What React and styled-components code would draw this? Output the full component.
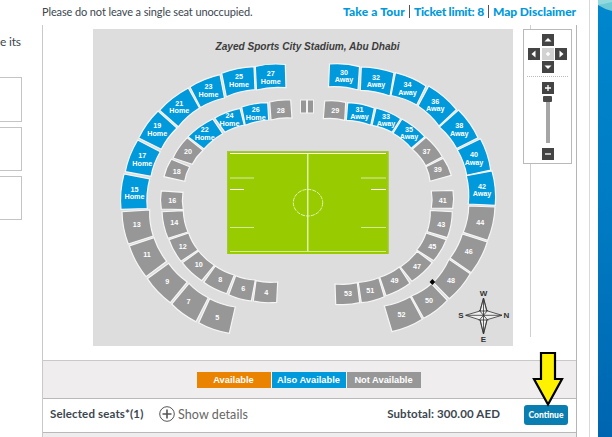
import styled, { createGlobalStyle } from "styled-components";

const HOME = "Home";
const AWAY = "Away";

// corners go outer start, outer end, inner end, inner start; then label x, y
const blocks = [
  { no: 15, side: HOME, pts: [121, 209.3, 124, 174, 149.7, 179, 147.3, 208.5], at: [134.5, 192.5] },
  { no: 17, side: HOME, pts: [125.3, 171.7, 137.7, 140, 160.3, 151.7, 151, 176.3], at: [142.3, 159] },
  { no: 19, side: HOME, pts: [138.7, 138, 158, 111, 177, 128, 161.3, 149.3], at: [157.2, 129] },
  { no: 21, side: HOME, pts: [159.5, 110.3, 188.3, 88, 199.5, 108, 178.3, 126.8], at: [179.3, 106.5] },
  { no: 23, side: HOME, pts: [190, 87, 220, 74.7, 224.5, 98, 200.5, 107.5], at: [208.5, 90] },
  { no: 25, side: HOME, pts: [221.7, 73.3, 254, 66.7, 255, 89.7, 226.3, 96.7], at: [239, 80] },
  { no: 27, side: HOME, pts: [255.3, 66.5, 285.3, 64.5, 286, 87.7, 256.5, 90], at: [270.7, 77] },
  { no: 30, side: AWAY, pts: [329.5, 64, 359.5, 66.7, 358, 90, 328.5, 86.8], at: [344, 75.5] },
  { no: 32, side: AWAY, pts: [361.3, 66.8, 394, 72.8, 390, 96, 360.3, 90.3], at: [376, 80.5] },
  { no: 34, side: AWAY, pts: [395.5, 72.7, 426, 86, 416.7, 105, 391, 95.5], at: [407.5, 88] },
  { no: 36, side: AWAY, pts: [428.7, 86, 456.5, 109.5, 439, 126, 418, 106], at: [435.3, 104.7] },
  { no: 38, side: AWAY, pts: [458.5, 110, 478, 137.7, 456.7, 148.5, 439.3, 127], at: [459.3, 129] },
  { no: 40, side: AWAY, pts: [480.5, 138.7, 490.7, 170, 466.7, 175.3, 457.3, 150], at: [474, 158] },
  { no: 42, side: AWAY, pts: [492, 171, 495.3, 205.3, 468.3, 204, 466.3, 175.7], at: [482, 189.5] },
  { no: 44, pts: [495, 207, 487.7, 240.3, 463.3, 232.3, 468.7, 206], at: [480.3, 222.3] },
  { no: 46, pts: [487.3, 242, 471.3, 272.7, 450, 258, 462.3, 234], at: [468.7, 251.5] },
  { no: 48, pts: [470.3, 273.7, 449.3, 298.7, 433.3, 282.3, 449, 259.3], at: [451, 280.3] },
  { no: 50, pts: [447.3, 300.3, 423.7, 318.3, 411.3, 296, 431.3, 283.7], at: [429, 300] },
  { no: 52, pts: [422.3, 319.3, 392, 331.7, 384.3, 306, 410.3, 296.7], at: [401.5, 314.7] },
  { no: 13, pts: [128.3, 244, 122, 211.7, 149.7, 210, 153.3, 236], at: [136.7, 224] },
  { no: 11, pts: [146, 276.7, 129.3, 246, 154, 237.7, 166.7, 261.3], at: [147, 254.5] },
  { no: 9, pts: [170.3, 302.7, 147.3, 278.7, 168.7, 263.3, 187.3, 282], at: [167.3, 281.3] },
  { no: 7, pts: [196, 321.7, 171.7, 304, 189, 283.3, 208.3, 297.7], at: [188.5, 301.7] },
  { no: 5, pts: [229.3, 333.3, 198.7, 322.7, 209.7, 298.7, 235.3, 307], at: [217.3, 317.3] },
  { no: 28, pts: [269.7, 102, 290.7, 100, 292, 118, 271, 120], at: [280.7, 110.5] },
  { no: 26, side: HOME, pts: [241.7, 107, 267.7, 102.7, 268.7, 120, 245.3, 125.3], at: [255.7, 113] },
  { no: 24, side: HOME, pts: [214.7, 118, 240, 108.3, 244.3, 125, 225, 132.3], at: [229.5, 119.3] },
  { no: 22, side: HOME, pts: [188, 136.7, 212.7, 119, 222.7, 133.7, 204, 149], at: [204.7, 133] },
  { no: 20, pts: [173, 158, 187.3, 137.7, 203, 150.3, 192.3, 164.3], at: [188, 151.3] },
  { no: 18, pts: [164, 176.7, 171.3, 159.3, 189.7, 166.7, 184.7, 181.3], at: [176.7, 171.3] },
  { no: 16, pts: [161.3, 209, 161.3, 191, 183, 192.3, 183.3, 209.7], at: [172.3, 200.7] },
  { no: 14, pts: [168, 238.3, 162, 211.7, 183.3, 210.7, 188, 232], at: [174.3, 222.3] },
  { no: 12, pts: [181, 261.3, 169, 239.7, 188.7, 233, 198, 250], at: [182.7, 246.7] },
  { no: 10, pts: [201.7, 280.7, 182.3, 262.7, 198.7, 251, 214.3, 265.3], at: [198.7, 264.7] },
  { no: 8, pts: [226.7, 293.7, 203.7, 282.3, 215.3, 266, 234.3, 275], at: [220.3, 279.7] },
  { no: 6, pts: [251.3, 301, 228.7, 294.7, 235.7, 275.7, 255.3, 280], at: [243.3, 288] },
  { no: 4, pts: [276.7, 302.3, 253.3, 301, 256, 280.7, 277.7, 282], at: [266.3, 292.7] },
  { no: 29, pts: [324.7, 101, 345.7, 102.3, 344.7, 120.3, 323.3, 118.7], at: [335.3, 110.3] },
  { no: 31, side: AWAY, pts: [347.7, 102.7, 374.3, 108, 370.7, 125.3, 346.3, 120.3], at: [359.5, 112.7] },
  { no: 33, side: AWAY, pts: [376, 108, 400.7, 118.7, 392, 132.3, 372, 125.3], at: [386, 119.5] },
  { no: 35, side: AWAY, pts: [402, 119, 424.7, 136.7, 411.3, 148.3, 393, 133.3], at: [409, 132.7] },
  { no: 37, pts: [426, 137.3, 442.3, 156.7, 425.7, 165.7, 412.3, 149.3], at: [426.5, 151.3] },
  { no: 39, pts: [443.3, 158.3, 451.3, 175.3, 430, 181.3, 426, 166.7], at: [437.7, 169.7] },
  { no: 41, pts: [453, 190.3, 452.7, 208.3, 431.3, 208, 431.3, 191], at: [442.7, 200] },
  { no: 43, pts: [452.3, 211.7, 447.3, 237.7, 427, 231.7, 430.3, 210.3], at: [441.3, 224.7] },
  { no: 45, pts: [446.3, 239.7, 433.7, 260.7, 416.7, 250, 426, 233], at: [432.3, 246.7] },
  { no: 47, pts: [432.3, 262.7, 412, 281.3, 400.3, 267, 417, 251.3], at: [417, 266] },
  { no: 49, pts: [410, 283.3, 386, 295.7, 379.7, 277.3, 399.3, 267], at: [394.5, 280.5] },
  { no: 51, pts: [384.3, 296.7, 361.3, 302.7, 358.3, 282.3, 378.7, 277.7], at: [370.3, 290.7] },
  { no: 53, pts: [359.7, 302.7, 335.7, 304.3, 335, 284, 357.3, 282.7], at: [348, 293.7] },
];

const legend = [
  { text: "Available", color: "#ea8400" },
  { text: "Also Available", color: "#0099dc" },
  { text: "Not Available", color: "#979797" },
];

// pushes the middle of an edge away from the centre circle
const bend = (x1, y1, x2, y2) => {
  const mx = (x1 + x2) / 2;
  const my = (y1 + y2) / 2;
  const dx = mx - 308;
  const dy = my - 200;
  const len = Math.hypot(dx, dy);
  const amount = Math.hypot(x2 - x1, y2 - y1) / 11;
  return `${mx + (dx / len) * amount} ${my + (dy / len) * amount}`;
};

const blockPath = ([a, b, c, d, e, f, g, h]) =>
  `M${a} ${b}Q${bend(a, b, c, d)} ${c} ${d}L${e} ${f}Q${bend(e, f, g, h)} ${g} ${h}Z`;

const Block = ({ block }) => {
  const [x, y] = block.at;
  return (
    <g>
      <BlockShape d={blockPath(block.pts)} $open={block.side} />
      <BlockLabel x={x} y={block.side ? y - 1 : y + 2.6}>
        {block.no}
      </BlockLabel>
      {block.side && (
        <BlockLabel x={x} y={y + 6.7}>
          {block.side}
        </BlockLabel>
      )}
    </g>
  );
};

const Stadium = () => (
  <Map viewBox="93 29 420 317">
    <MapTitle x="307.5" y="50" textLength="184" lengthAdjust="spacingAndGlyphs">
      Zayed Sports City Stadium, Abu Dhabi
    </MapTitle>
    {blocks.map((block) => (
      <Block key={block.no} block={block} />
    ))}
    <g fill="#979797" stroke="#f4f4f4">
      <rect x="300.5" y="100" width="6" height="13" />
      <rect x="307.5" y="100" width="6" height="13" />
    </g>

    <rect x="227" y="151" width="161.5" height="103" fill="#98cb00" />
    <path d="M227.5 254V151.5H388V254" fill="none" stroke="#a2c63f" />
    <g fill="none" stroke="#fff">
      <path d="M230 153.5H386M230 189.5H244M371 189.5H386" />
      <path d="M307.8 153.5V252" stroke="#effad0" strokeWidth="1.2" />
      <path d="M230 251.5H386M230 227.5H254M361 227.5H386" stroke="#d5eb92" />
      <path d="M230 178H254M361 178H386" stroke="#b9dc58" strokeWidth="2" />
      <ellipse cx="308" cy="202.7" rx="14.7" ry="13.3" stroke="#e4f4b4" strokeDasharray="4 1" />
    </g>

    <path d="M432.4 279L435.2 282L432.4 285L429.6 282Z" fill="#000" />

    <g stroke="#333" strokeWidth="0.8" fill="#f0f0f0">
      <path d="M483.5 298L486.6 310.7L502 315.3L487 319.7L483.5 334L480.2 320L465.5 315.3L480 311Z" />
      <path d="M479 310L488 320.5M488 310L479 320.5M466 315.3H502M483.5 298V334" />
      <path d="M483.5 298L487 311H480ZM483.5 334L487 320H480Z" fill="none" />
    </g>
    <CompassText x="483.5" y="296">W</CompassText>
    <CompassText x="483.5" y="342">E</CompassText>
    <CompassText x="461" y="318.3">S</CompassText>
    <CompassText x="506.5" y="318.3">N</CompassText>
  </Map>
);

const Arrow = ({ d }) => (
  <PadButton>
    <svg width="12" height="12" viewBox="0 0 12 12">
      <path d={d} fill="#fff" />
    </svg>
  </PadButton>
);

const MapControls = () => (
  <Controls>
    <Pad>
      <span />
      <Arrow d="M6 4L9.5 7.5H2.5Z" />
      <span />
      <Arrow d="M3.5 6L7.5 2.5V9.5Z" />
      <PadButton $faded>
        <svg width="12" height="12" viewBox="0 0 12 12">
          <path d="M6 4V8M4 6H8" stroke="#fff" strokeWidth="1.5" />
        </svg>
      </PadButton>
      <Arrow d="M8.5 6L4.5 2.5V9.5Z" />
      <span />
      <Arrow d="M6 8L9.5 4.5H2.5Z" />
      <span />
    </Pad>
    <Divider />
    <PadButton>
      <svg width="12" height="12" viewBox="0 0 12 12">
        <path d="M6 3V9M3 6H9" stroke="#fff" strokeWidth="1.3" />
      </svg>
    </PadButton>
    <Thumb />
    <Track />
    <PadButton>
      <svg width="12" height="12" viewBox="0 0 12 12">
        <path d="M3 6H9" stroke="#fff" strokeWidth="1.3" />
      </svg>
    </PadButton>
  </Controls>
);

const App = () => {
  return (
    <>
      <GlobalStyle />
      <Page>
        <Side>
          <SideText>e its</SideText>
          <SideBox $height={45} />
          <SideBox $height={44} />
          <SideBox $height={44} />
        </Side>

        <Main>
          <Header>
            <Note>Please do not leave a single seat unoccupied.</Note>
            <Links>
              <Link $space="0.15px">Take a Tour</Link>
              <i />
              <Link $space="-0.2px">Ticket limit: 8</Link>
              <i />
              <Link $space="-0.05px">Map Disclaimer</Link>
            </Links>
          </Header>

          <Panel>
            <MapArea>
              <Stadium />
              <ControlRail>
                <MapControls />
              </ControlRail>
            </MapArea>
            <Legend>
              {legend.map((item) => (
                <LegendItem key={item.text} $color={item.color}>
                  {item.text}
                </LegendItem>
              ))}
            </Legend>
            <Summary>
              <Selected>Selected seats*(1)</Selected>
              <Details>
                <svg width="16" height="16" viewBox="0 0 16 16">
                  <circle cx="8" cy="8" r="7.3" fill="none" stroke="#555" />
                  <path d="M8 3.5V12.5M3.5 8H12.5" stroke="#555" strokeWidth="1.6" />
                </svg>
                Show details
              </Details>
              <Subtotal>Subtotal: 300.00 AED</Subtotal>
              <Continue>Continue</Continue>
            </Summary>
          </Panel>
        </Main>

        <Gutter />
        <Backdrop viewBox="0 0 14 437">
          <defs>
            <linearGradient id="sea" x1="0" y1="0" x2="0" y2="1">
              <stop offset="0" stopColor="#0087cd" />
              <stop offset="0.5" stopColor="#007bc3" />
              <stop offset="1" stopColor="#0065b0" />
            </linearGradient>
          </defs>
          <rect width="14" height="437" fill="url(#sea)" />
          <path d="M0 0H14V11Q6 9 0 5Z" fill="#6ecbd6" />
          <path d="M0 0H14V2Q6 4 0 5Z" fill="#93d9de" />
        </Backdrop>

        <Pointer width="34" height="58" viewBox="0 0 34 58">
          <path
            d="M10 3H24V29H31L17 54.5L3 29H10Z"
            fill="#fff200"
            stroke="#000"
            strokeWidth="2.2"
          />
        </Pointer>
      </Page>
    </>
  );
};

export default App;

const GlobalStyle = createGlobalStyle`
  body {
    margin: 0;
    background: #fff;
    font-family: Lato, "Open Sans", sans-serif;
    color: #3c4650;
  }
  * {
    box-sizing: border-box;
  }
`;

const Page = styled.div`
  position: relative;
  display: flex;
  width: 612px;
  height: 437px;
  overflow: hidden;
`;

const Side = styled.aside`
  width: 42px;
  flex: none;
  padding-top: 35px;
`;

const SideText = styled.div`
  height: 42px;
  font-size: 12px;
  line-height: 14px;
  letter-spacing: -0.2px;
  white-space: nowrap;
`;

const SideBox = styled.div`
  width: 22px;
  height: ${(props) => props.$height}px;
  margin-bottom: 5px;
  border: 1px solid #c4c4c4;
  border-left: none;
`;

const Main = styled.main`
  width: 535px;
  flex: none;
`;

const Header = styled.header`
  height: 25px;
  display: flex;
  justify-content: space-between;
  align-items: center;
  padding: 0 1px 2px 0;
  white-space: nowrap;
`;

const Note = styled.span`
  font-size: 11px;
  line-height: 14px;
  letter-spacing: -0.12px;
`;

const Links = styled.nav`
  display: flex;
  align-items: center;

  i {
    width: 1px;
    height: 13px;
    margin: 0 4px;
    background: #555;
  }
`;

const Link = styled.a`
  font-size: 12px;
  line-height: 14px;
  font-weight: 900;
  letter-spacing: ${(props) => props.$space};
  color: #0099dc;
`;

const Panel = styled.section`
  height: 412px;
  border-left: 1px solid #c9c9c9;
  border-right: 1px solid #b5b5b5;
  background: #efedee;
`;

const MapArea = styled.div`
  height: 336px;
  display: flex;
  padding: 4px 0 0 50px;
  background: #fff;
  border-bottom: 1px solid #c9c9c9;
`;

const Map = styled.svg`
  width: 420px;
  height: 317px;
  flex: none;
  background: #ddd;
  font-family: "Liberation Sans", Arial, sans-serif;
  font-weight: bold;
`;

const MapTitle = styled.text`
  font-size: 10px;
  font-style: italic;
  text-anchor: middle;
  fill: #3c3c3c;
`;

const BlockShape = styled.path`
  fill: ${(props) => (props.$open ? "#0099dc" : "#979797")};
  stroke: #f6f6f6;
  stroke-width: 1.2;
`;

const BlockLabel = styled.text`
  font-size: 7.2px;
  text-anchor: middle;
  fill: #fff;
`;

const CompassText = styled.text`
  font-size: 8px;
  text-anchor: middle;
  fill: #333;
`;

const ControlRail = styled.div`
  height: 312px;
  margin: -4px 0 0 17px;
  border-left: 1px solid #d0d0d0;
`;

const Controls = styled.div`
  width: 49px;
  height: 135px;
  margin: 4px 0 0 -8px;
  padding-top: 4px;
  display: flex;
  flex-direction: column;
  align-items: center;
  border: 1px solid #b9b9b9;
  background: #fff;
`;

const Pad = styled.div`
  display: grid;
  grid-template-columns: repeat(3, 12px);
  grid-auto-rows: 12px;
  gap: 1.5px;
`;

const PadButton = styled.div`
  width: 12px;
  height: 12px;
  flex: none;
  background: ${(props) => (props.$faded ? "#d2d2d2" : "#444")};

  svg {
    display: block;
  }
`;

const Divider = styled.div`
  width: 41px;
  margin: 3px 0 5px;
  border-top: 1px dotted #bbb;
`;

const Thumb = styled.div`
  width: 9px;
  height: 6px;
  margin-top: 2px;
  border-radius: 1px;
  background: #4a4a4a;
`;

const Track = styled.div`
  width: 4px;
  height: 41px;
  margin-bottom: 5px;
  background: #a6a6a6;
`;

const Legend = styled.div`
  height: 38px;
  display: flex;
  justify-content: center;
  padding: 11px 2px 0 0;
  border-bottom: 1px solid #b9b9b9;
`;

const LegendItem = styled.div`
  width: 74px;
  height: 16px;
  font: bold 9.3px/17px "Liberation Sans", Arial, sans-serif;
  text-align: center;
  white-space: nowrap;
  color: #fff;
  background: ${(props) => props.$color};

  & + & {
    width: 75px;
    border-left: 1px solid #f4f4f4;
  }
`;

const Summary = styled.div`
  height: 34px;
  display: flex;
  align-items: center;
  padding: 0 8px 2px 7px;
  background: #fff;
  border-bottom: 1px solid #b9b9b9;
  white-space: nowrap;
`;

const Selected = styled.strong`
  width: 109px;
  padding-bottom: 2px;
  font-size: 11.5px;
  letter-spacing: 0.15px;
`;

const Details = styled.div`
  display: flex;
  align-items: center;
  gap: 3px;
  padding-bottom: 1px;
  font-size: 12.5px;
  letter-spacing: 0.08px;
  color: #666;
`;

const Subtotal = styled.strong`
  margin-left: auto;
  margin-right: 24px;
  padding-bottom: 3px;
  font-size: 11.5px;
  letter-spacing: 0.12px;
`;

const Continue = styled.button`
  width: 44px;
  height: 20px;
  padding: 0;
  border: none;
  border-radius: 3px;
  font: 900 8.5px Lato, sans-serif;
  color: #fff;
  background: #0a7eb0;
`;

const Gutter = styled.div`
  width: 21px;
  flex: none;
  background: linear-gradient(90deg, #fff 12px, #d9d9d9 12px, #d9d9d9 13px, #fff 13px);
`;

const Backdrop = styled.svg`
  width: 14px;
  height: 437px;
  flex: none;
`;

// drawn over the legend and the button
const Pointer = styled.svg`
  position: absolute;
  left: 531px;
  top: 350px;
`;
